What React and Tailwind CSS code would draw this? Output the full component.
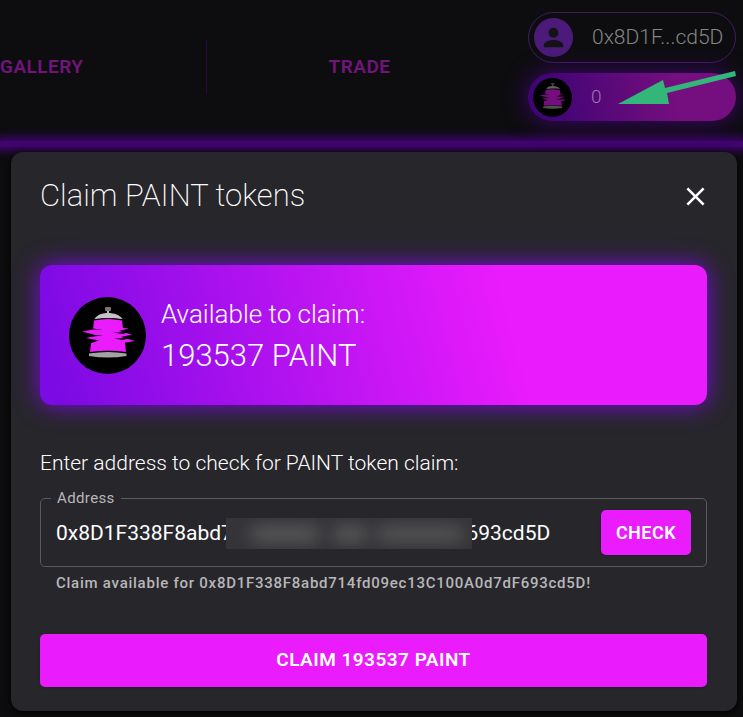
import React from "react";

const ADDRESS = "0x8D1F338F8abd714fd09ec13C100A0d7dF693cd5D";

function PaintCan({ className }) {
  return (
    <svg viewBox="0 0 77 77" className={className} aria-hidden="true">
      <circle cx="38.5" cy="38.5" r="38.5" fill="#000" />
      <rect x="36" y="10" width="6" height="4" rx="1" fill="#777" />
      <path d="M38 14h2v3h-2z" fill="#bbb" />
      <path d="M25.500 22C28 18 33 16 39 16s12 2 14.500 6C46 20.500 33 20.500 25.500 22z" fill="#c4c4c4" />
      <path
        d="M25 23.500Q39 20.500 53 23.500L54 31L60 31.500L50 34L63 37.500L52 40L66 44L56 45.500L57 55Q39 52.500 21 55L22 46L30 43.500L17 41L28 38.500L13 34.500L24 32.500z"
        fill="#ea1bfc"
      />
      <path d="M24 31.500L34 33L24 32.500zM60 35L44 35.500L54 37zM18 37.500L34 38.500L24 39.500zM60 41L45 41.500L54 43z" fill="#000" />
      <path d="M20 56.500Q39 53.500 57.500 56.500V59Q39 62 20 59z" fill="#a3a3a3" />
    </svg>
  );
}

function Header() {
  return (
    <header className="flex h-[141px] justify-between">
      <nav className="mt-10 flex h-[54px] items-center text-[19px] font-semibold tracking-wide text-[#72147c]">
        <a href="#gallery">GALLERY</a>
        <span className="mx-[122px] h-full w-px bg-[#2a0842]" />
        <a href="#trade">TRADE</a>
      </nav>
      <div className="relative mt-3 mr-[7px] flex w-52 flex-col gap-[10px]">
        <button className="flex h-[51px] items-center rounded-full border border-[#421c63] pl-[5px] text-[21px] font-light text-[#858585]">
          <span className="flex size-[39px] items-center justify-center rounded-full bg-[#4c1a78]">
            <svg viewBox="0 0 24 24" className="size-[29px]" fill="#141416" aria-hidden="true">
              <path d="M12 12c2.210 0 4-1.790 4-4s-1.790-4-4-4-4 1.790-4 4 1.790 4 4 4zm0 2c-2.670 0-8 1.340-8 4v2h16v-2c0-2.660-5.330-4-8-4z" />
            </svg>
          </span>
          <span className="ml-[19px]">0x8D1F...cd5D</span>
        </button>
        <button className="flex h-12 items-center rounded-full bg-[linear-gradient(80deg,#400475_10%,#750e7e_70%)] pl-[5px] text-[19px] font-light text-[#9a78a8] shadow-[0_0_24px_#400475]">
          <PaintCan className="size-[39px] brightness-50" />
          <span className="ml-[19px]">0</span>
        </button>
        <svg
          viewBox="0 0 120 36"
          className="absolute top-[58px] right-0 h-9 w-[120px]"
          fill="#33b679"
          aria-hidden="true"
        >
          <path d="M2 34 47 10l2 8 70-17 1 5-69 17 2 11z" />
        </svg>
      </div>
    </header>
  );
}

function ClaimDialog() {
  return (
    <section
      role="dialog"
      aria-labelledby="claim-title"
      className="relative mr-[6px] mb-[6px] ml-[11px] rounded-xl bg-[#27262b] pt-[22px] pr-[30px] pb-6 pl-[29px] text-white shadow-[0_2px_8px_#000]"
    >
      <div className="flex h-11 items-center justify-between">
        <h2 id="claim-title" className="text-[31px] font-extralight">
          Claim PAINT tokens
        </h2>
        <button aria-label="Close" className="-mr-1">
          <svg viewBox="0 0 24 24" className="size-[31px]" fill="currentColor" aria-hidden="true">
            <path d="M19 6.410 17.590 5 12 10.590 6.410 5 5 6.410 10.590 12 5 17.590 6.410 19 12 13.410 17.590 19 19 17.590 13.410 12z" />
          </svg>
        </button>
      </div>

      <div className="mt-[47px] flex h-[140px] items-center rounded-xl bg-[linear-gradient(75deg,#7c0ae4_3%,#ea1bfc_70%)] pl-[29px] shadow-[0_0_24px_#7c0ae4]">
        <PaintCan className="size-[77px]" />
        <div className="ml-[15px] font-light">
          <p className="text-[26px] leading-[42px]">Available to claim:</p>
          <p className="text-[31px] leading-[42px]">193537 PAINT</p>
        </div>
      </div>

      <p className="mt-[42px] text-[21px] leading-8 font-light">
        Enter address to check for PAINT token claim:
      </p>

      <div className="relative mt-[19px] flex h-[69px] items-center rounded-[5px] border border-[#5b5a5e] pr-[15px] pl-[15px]">
        <label
          htmlFor="address"
          className="absolute -top-[10px] left-[10px] bg-[#27262b] px-[6px] text-[15px] leading-[18px] tracking-wide text-[#b7b7b9]"
        >
          Address
        </label>
        <input
          id="address"
          defaultValue={ADDRESS}
          className="h-8 min-w-0 flex-1 bg-transparent text-[21px] outline-none"
        />
        <span className="absolute top-[19px] left-[185px] flex h-[31px] w-[246px] items-center overflow-hidden bg-[#353438]">
          <span className="ml-6 h-4 w-[70px] rounded-full bg-[#58585a] blur-[8px]" />
          <span className="ml-3 h-4 w-[36px] rounded-full bg-[#58585a] blur-[8px]" />
          <span className="ml-2 h-4 w-[88px] rounded-full bg-[#545456] blur-[8px]" />
        </span>
        <button className="h-[45px] rounded-[5px] bg-[#ea1bfc] px-[15px] text-[18px] font-semibold tracking-wide shadow">
          CHECK
        </button>
      </div>
      <p className="mt-[6px] ml-4 text-[15px] leading-5 font-medium tracking-wider text-[#b7b7b9]">
        Claim available for {ADDRESS}!
      </p>

      <button className="mt-[41px] h-[53px] w-full rounded-[5px] bg-[#ea1bfc] text-[19px] font-semibold tracking-wide shadow">
        CLAIM 193537 PAINT
      </button>
    </section>
  );
}

export default function App() {
  return (
    <main className="min-h-screen overflow-hidden bg-[#0d0d0f] font-['Roboto','Liberation_Sans',sans-serif]">
      <Header />
      <div className="mb-[5px] h-[6px] bg-[#40046e] shadow-[0_0_10px_4px_#40046e]" />
      <ClaimDialog />
    </main>
  );
}
